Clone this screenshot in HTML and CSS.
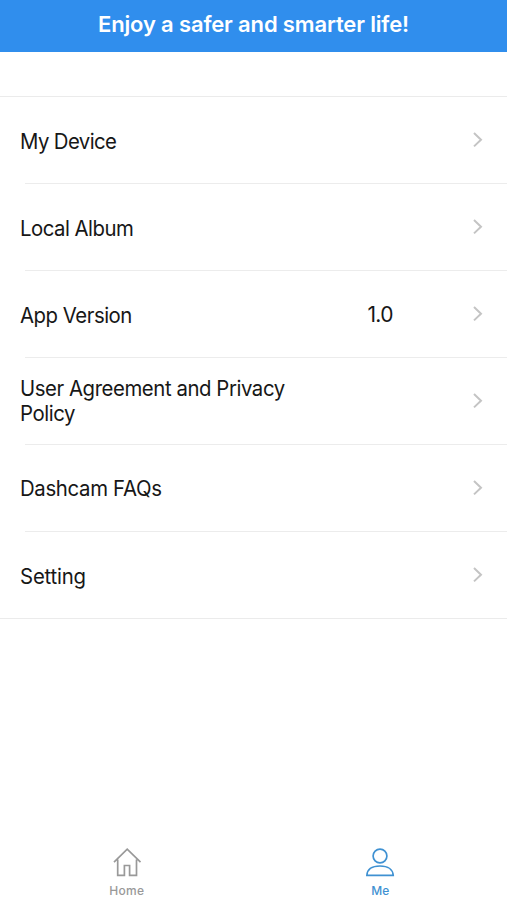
FILE: index.html
```html
<!DOCTYPE html>
<html lang="en">
<head>
<meta charset="utf-8">
<title>Me</title>
<link rel="stylesheet" href="styles.css">
</head>
<body>
<div class="app">
  <header class="banner"><h1>Enjoy a safer and smarter life!</h1></header>
  <main class="menu">
    <a class="row"><span class="label device">My Device</span><svg class="chevron" viewBox="0 0 12 16"><path d="M2 1 9 7.700 2 14.400"/></svg></a>
    <a class="row"><span class="label album">Local Album</span><svg class="chevron" viewBox="0 0 12 16"><path d="M2 1 9 7.700 2 14.400"/></svg></a>
    <a class="row"><span class="label version">App Version</span><span class="value">1.0</span><svg class="chevron" viewBox="0 0 12 16"><path d="M2 1 9 7.700 2 14.400"/></svg></a>
    <a class="row"><span class="label policy">User Agreement and Privacy<br>Policy</span><svg class="chevron" viewBox="0 0 12 16"><path d="M2 1 9 7.700 2 14.400"/></svg></a>
    <a class="row"><span class="label faqs">Dashcam FAQs</span><svg class="chevron" viewBox="0 0 12 16"><path d="M2 1 9 7.700 2 14.400"/></svg></a>
    <a class="row"><span class="label setting">Setting</span><svg class="chevron" viewBox="0 0 12 16"><path d="M2 1 9 7.700 2 14.400"/></svg></a>
  </main>
  <nav class="tabs">
    <a class="tab"><svg class="icon" viewBox="0 0 32 34"><path d="M3 18.200 16.200 5.200 29.500 18.200M6.700 15.500v15.800h6.700V21.500h5.200v9.800h6.900V15.500"/></svg><span>Home</span></a>
    <a class="tab active"><svg class="icon" viewBox="0 0 32 34"><circle cx="16" cy="12" r="6.900"/><path d="M2.900 31.300c.3-5.500 4.700-9.300 13.100-9.300s12.900 3.800 13.200 9.300z"/></svg><span>Me</span></a>
  </nav>
</div>
</body>
</html>
```
FILE: styles.css
```css
* { box-sizing: border-box; }
body { margin: 0; background: #fff; color: #171717; font-family: Inter, "Liberation Sans", sans-serif; }
.app { height: 900px; display: flex; flex-direction: column; overflow: hidden; }
.banner { height: 52px; flex: none; background: #308eed; color: #fff; padding-top: 9px; text-align: center; }
.banner h1 { margin: 0; font-size: 22px; line-height: 30px; font-weight: 600; letter-spacing: -.15px; white-space: nowrap; }
.menu { margin-top: 44px; border-top: 1px solid #ebebeb; border-bottom: 1px solid #ebebeb; }
.row { height: 87px; display: flex; align-items: center; padding: 2px 23px 0 19.5px; background: linear-gradient(#ececec, #ececec) 25px bottom / 100% 1px no-repeat; }
.row:last-child { height: 86px; background: none; }
.label { width: 276px; font-size: 21px; line-height: 25px; white-space: nowrap; transform: scaleX(.97); transform-origin: left; }
.device { letter-spacing: -.63px; }
.album { letter-spacing: -.53px; }
.version { letter-spacing: -.5px; }
.policy { letter-spacing: -.45px; padding-bottom: 3px; }
.faqs { letter-spacing: -.35px; padding-bottom: 2px; }
.setting { letter-spacing: -.2px; padding-top: 1px; }
.value { margin-left: 72px; padding-bottom: 2px; font-size: 21px; letter-spacing: -.7px; }
.chevron { width: 12px; height: 16px; margin: -3px 0 0 auto; fill: none; stroke: #c4c4c4; stroke-width: 2; }
.tabs { margin-top: auto; height: 56px; display: grid; grid-template-columns: 1fr 1fr; }
.tab { display: flex; flex-direction: column; align-items: center; color: #999; font-size: 12px; line-height: 16px; font-weight: 500; letter-spacing: .3px; }
.active { color: #3f91d2; letter-spacing: 0; }
.icon { width: 32px; height: 34px; margin-bottom: 5px; fill: none; stroke: currentColor; stroke-width: 1.700; }
```
